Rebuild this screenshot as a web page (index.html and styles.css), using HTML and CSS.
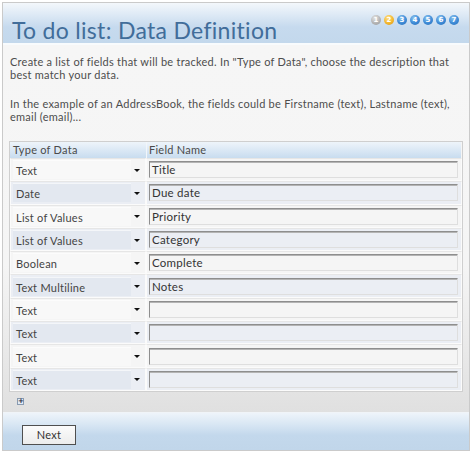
FILE: index.html
```html
<!DOCTYPE html>
<html>
<head>
<meta charset="utf-8">
<link rel="stylesheet" href="styles.css">
</head>
<body>
<div class="frame">
  <div class="header">
    <h1 class="title">To do list: Data Definition</h1>
    <div class="steps">
      <span class="step done">1</span>
      <span class="step current">2</span>
      <span class="step">3</span>
      <span class="step">4</span>
      <span class="step">5</span>
      <span class="step">6</span>
      <span class="step">7</span>
    </div>
  </div>
  <div class="content">
    <p class="intro">Create a list of fields that will be tracked. In "Type of Data", choose the description that best match your data.</p>
    <p class="intro">In the example of an AddressBook, the fields could be Firstname (text), Lastname (text), email (email)...</p>
    <div class="grid">
      <div class="grid-head">
        <div class="hcell c1">Type of Data</div>
        <div class="hcell c2">Field Name</div>
      </div>
      <div class="row"><div class="cell c1"><div class="sel"><span class="sel-text">Text</span><span class="arrow"></span></div></div><div class="cell c2"><div class="inp">Title</div></div></div>
      <div class="row alt"><div class="cell c1"><div class="sel"><span class="sel-text">Date</span><span class="arrow"></span></div></div><div class="cell c2"><div class="inp">Due date</div></div></div>
      <div class="row"><div class="cell c1"><div class="sel"><span class="sel-text">List of Values</span><span class="arrow"></span></div></div><div class="cell c2"><div class="inp">Priority</div></div></div>
      <div class="row alt"><div class="cell c1"><div class="sel"><span class="sel-text">List of Values</span><span class="arrow"></span></div></div><div class="cell c2"><div class="inp">Category</div></div></div>
      <div class="row"><div class="cell c1"><div class="sel"><span class="sel-text">Boolean</span><span class="arrow"></span></div></div><div class="cell c2"><div class="inp">Complete</div></div></div>
      <div class="row alt"><div class="cell c1"><div class="sel"><span class="sel-text">Text Multiline</span><span class="arrow"></span></div></div><div class="cell c2"><div class="inp">Notes</div></div></div>
      <div class="row"><div class="cell c1"><div class="sel"><span class="sel-text">Text</span><span class="arrow"></span></div></div><div class="cell c2"><div class="inp"></div></div></div>
      <div class="row alt"><div class="cell c1"><div class="sel"><span class="sel-text">Text</span><span class="arrow"></span></div></div><div class="cell c2"><div class="inp"></div></div></div>
      <div class="row"><div class="cell c1"><div class="sel"><span class="sel-text">Text</span><span class="arrow"></span></div></div><div class="cell c2"><div class="inp"></div></div></div>
      <div class="row alt"><div class="cell c1"><div class="sel"><span class="sel-text">Text</span><span class="arrow"></span></div></div><div class="cell c2"><div class="inp"></div></div></div>
    </div>
    <div class="add-row"><span class="plus">+</span></div>
  </div>
  <div class="footer">
    <button class="btn">Next</button>
  </div>
</div>
</body>
</html>
```
FILE: styles.css
```css
html, body {
  margin: 0;
  padding: 0;
  background: #ffffff;
}
body {
  font-family: Lato, "Liberation Sans", sans-serif;
  font-size: 11px;
  letter-spacing: 0.25px;
  color: #4a4a4a;
}
.frame {
  margin: 2px 0 0 2px;
  width: 466px;
  height: 447px;
  border: 1px solid #cacaca;
  display: flex;
  flex-direction: column;
  background: #f4f4f4;
}
.header {
  height: 41px;
  border-bottom: 2px solid #f8fbfd;
  background: linear-gradient(#f3f7fb 0%, #dde9f5 30%, #c6daee 60%, #c3d8ec 100%);
  display: flex;
  justify-content: space-between;
  align-items: flex-start;
}
.title {
  margin: 14px 0 0 9px;
  font-size: 23px;
  font-weight: 400;
  line-height: 26px;
  color: #416d9a;
  letter-spacing: 0.3px;
}
.steps {
  display: flex;
  gap: 3px;
  margin: 12px 10px 0 0;
}
.step {
  width: 10px;
  height: 10px;
  border-radius: 50%;
  background: radial-gradient(circle at 40% 30%, #8cc4f0 0%, #3d8ad6 55%, #2a6fb8 100%);
  color: #ffffff;
  font-size: 7px;
  font-weight: 700;
  line-height: 10px;
  letter-spacing: 0;
  text-align: center;
  font-family: "DejaVu Sans", sans-serif;
}
.step.done {
  background: radial-gradient(circle at 40% 30%, #e4e4e4 0%, #b4b4b4 55%, #9a9a9a 100%);
}
.step.current {
  background: radial-gradient(circle at 40% 30%, #ffe28a 0%, #f3b72e 55%, #d9951a 100%);
}
.content {
  flex: 1;
  padding: 10px 6px 0 6px;
  background: linear-gradient(#f6f6f6 0%, #f5f5f5 60%, #e8e8e8 85%, #e0e0e0 100%);
}
.intro {
  margin: 0 0 16px 1px;
  line-height: 13px;
  color: #4d4d4d;
}
.intro + .intro {
  margin-bottom: 0;
}
.grid {
  margin-top: 18px;
  border: 1px solid #cfcfcf;
  background: #f5f5f5;
}
.grid-head {
  display: grid;
  grid-template-columns: 136px 1fr;
  height: 16px;
  background: linear-gradient(#eef4fa 0%, #dbe8f5 50%, #c8dcef 100%);
  margin-right: 1px;
}
.hcell {
  line-height: 16px;
  padding-left: 3px;
  color: #4a4a4a;
}
.hcell.c2 {
  border-left: 1px solid #f2f6fa;
  padding-left: 2px;
}
.row {
  display: grid;
  grid-template-columns: 136px 1fr;
  height: 23.3px;
  background: #f5f5f5;
}
.row.alt {
  background: #ebeef4;
}
.cell {
  border: 1px solid #fbfbfb;
  border-top-color: #e6e6e6;
  box-sizing: border-box;
  display: flex;
  align-items: center;
}
.cell.c1 {
  padding: 0 3px 0 2px;
}
.cell.c2 {
  padding: 0 3px 0 2px;
}
.sel {
  flex: 1;
  height: 19px;
  display: flex;
  align-items: center;
}
.sel-text {
  flex: 1;
  height: 19px;
  line-height: 19px;
  padding-left: 3px;
  background: rgba(255, 255, 255, 0.35);
  border-top: 1px solid rgba(255,255,255,0.6);
  box-sizing: border-box;
  color: #444;
}
.row.alt .sel-text {
  background: rgba(220, 226, 236, 0.5);
}
.arrow {
  width: 11px;
  display: flex;
  justify-content: center;
}
.arrow::before {
  content: "";
  border-left: 3px solid transparent;
  border-right: 3px solid transparent;
  border-top: 3px solid #111;
  margin-top: 1px;
}
.inp {
  flex: 1;
  height: 17px;
  box-sizing: border-box;
  border: 1px solid;
  border-color: #8e8e8e #dedede #dedede #8e8e8e;
  box-shadow: inset 0 1px 0 #b4b4b4;
  line-height: 15px;
  padding-left: 2px;
  font-size: 11.5px;
  color: #333;
}
.add-row {
  height: 20px;
  display: flex;
  align-items: center;
  padding-left: 8px;
}
.plus {
  width: 5px;
  height: 5px;
  border: 1px solid #8a9bb0;
  background: #dfe9f5;
  font-size: 7px;
  line-height: 5px;
  text-align: center;
  color: #223;
  letter-spacing: 0;
  font-family: "DejaVu Sans", sans-serif;
  font-weight: 700;
}
.footer {
  height: 38px;
  background: linear-gradient(#eef4fa 0%, #d9e7f4 30%, #c3d8ec 60%, #c1d6ea 100%);
  display: flex;
  align-items: flex-start;
  padding-left: 19px;
  border-top: 1px solid #f0f4f8;
}
.btn {
  margin-top: 12px;
  width: 54px;
  height: 20px;
  border: 1px solid #4f4f4f;
  background: linear-gradient(#fbfbfb, #ececec);
  font-family: Lato, "Liberation Sans", sans-serif;
  font-size: 11px;
  letter-spacing: 0.25px;
  color: #333;
  padding: 0;
  border-radius: 0;
}
```
